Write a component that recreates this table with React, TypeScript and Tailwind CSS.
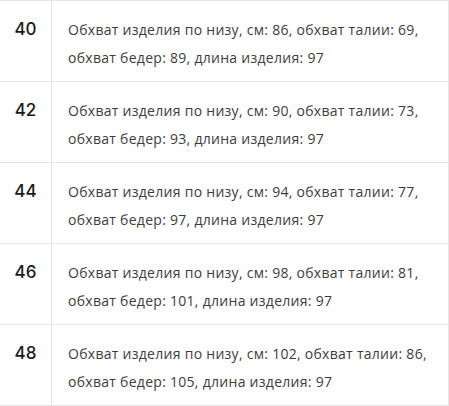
import React from "react";

const rows = [
  { size: "40", l1: "Обхват изделия по низу, см: 86, обхват талии: 69,", l2: "обхват бедер: 89, длина изделия: 97" },
  { size: "42", l1: "Обхват изделия по низу, см: 90, обхват талии: 73,", l2: "обхват бедер: 93, длина изделия: 97" },
  { size: "44", l1: "Обхват изделия по низу, см: 94, обхват талии: 77,", l2: "обхват бедер: 97, длина изделия: 97" },
  { size: "46", l1: "Обхват изделия по низу, см: 98, обхват талии: 81,", l2: "обхват бедер: 101, длина изделия: 97" },
  { size: "48", l1: "Обхват изделия по низу, см: 102, обхват талии: 86,", l2: "обхват бедер: 105, длина изделия: 97" },
];

export default function App() {
  return (
    <div className="w-[449px] bg-white" style={{ fontFamily: '"Open Sans", "Noto Sans", sans-serif' }}>
      <div className="border-t border-r border-[#e6e6e6]">
        {rows.map((r) => (
          <div key={r.size} className="flex h-[81px] border-b border-[#e6e6e6]">
            <div
              className="w-[52px] shrink-0 border-r border-[#e6e6e6] pt-[14px] text-center text-[17px] font-medium leading-[28px] text-[#1a1a1a]"
              style={{ fontFamily: 'Inter, "Open Sans", sans-serif' }}
            >
              {r.size}
            </div>
            <div className="pl-[16px] pt-[15px] text-[14px] leading-[28px] text-[#3d3d3d] tracking-[0.28px]">
              <div>{r.l1}</div>
              <div>{r.l2}</div>
            </div>
          </div>
        ))}
      </div>
    </div>
  );
}
